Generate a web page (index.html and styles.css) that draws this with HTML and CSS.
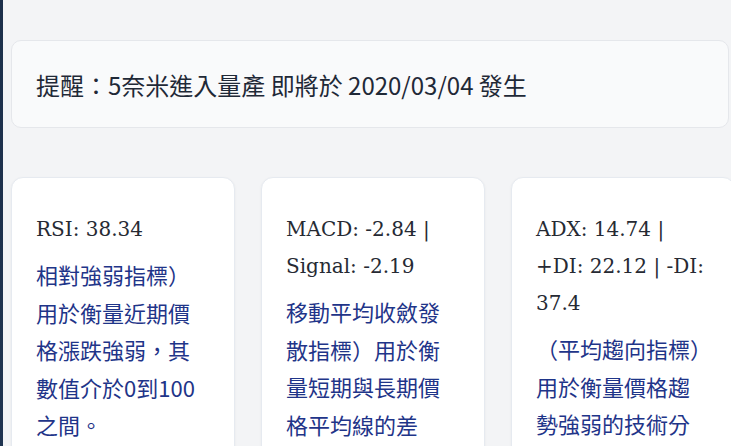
FILE: index.html
```html
<!DOCTYPE html>
<html lang="zh-Hant">
<head>
<meta charset="utf-8">
<title>技術指標</title>
<link rel="stylesheet" href="styles.css">
</head>
<body>
<div class="layout">
  <div class="rail"></div>
  <main class="main">
    <div class="notice">提醒：5奈米進入量產 即將於 2020/03/04 發生</div>
    <section class="cards">
      <article class="card">
        <p class="value">RSI: 38.34</p>
        <p class="desc">相對強弱指標）用於衡量近期價格漲跌強弱，其數值介於0到100之間。</p>
      </article>
      <article class="card">
        <p class="value">MACD: -2.84 | Signal: -2.19</p>
        <p class="desc">移動平均收斂發散指標）用於衡量短期與長期價格平均線的差異。</p>
      </article>
      <article class="card">
        <p class="value">ADX: 14.74 | +DI: 22.12 | -DI: 37.4</p>
        <p class="desc">（平均趨向指標）用於衡量價格趨勢強弱的技術分析工具。</p>
      </article>
    </section>
  </main>
</div>
</body>
</html>
```

FILE: styles.css
```css
html, body {
  margin: 0;
  padding: 0;
  height: 100%;
  overflow: hidden;
}

body {
  background: #f3f4f6;
  font-family: "Noto Sans CJK TC", "Noto Sans", sans-serif;
}

.layout {
  display: flex;
  min-height: 100%;
}

.rail {
  flex: 0 0 3px;
  background: linear-gradient(#1c2f4a, #203552);
}

.main {
  flex: 0 0 auto;
  width: 718px;
  padding: 40px 0 0 8px;
  box-sizing: content-box;
}

.notice {
  background: #f9fafb;
  border: 1px solid #e5e7eb;
  border-radius: 10px;
  height: 86px;
  display: flex;
  align-items: center;
  padding: 0 24px;
  font-size: 24px;
  color: #1f2937;
  white-space: nowrap;
}

.cards {
  display: grid;
  grid-template-columns: repeat(3, 224px);
  gap: 26px;
  margin-top: 49px;
}

.card {
  background: #ffffff;
  border: 1px solid #e6eaf0;
  border-radius: 12px;
  box-shadow: 0 1px 3px rgba(15, 23, 42, 0.05);
  padding: 33px 24px 32px;
  min-height: 300px;
}

.value {
  margin: 0 0 8px;
  font-family: "DejaVu Serif", serif;
  font-size: 20px;
  line-height: 37px;
  color: #262a33;
}

.desc {
  margin: 0;
  font-family: "Noto Sans CJK TC", sans-serif;
  font-size: 22px;
  line-height: 37.5px;
  color: #1f3589;
}
```
